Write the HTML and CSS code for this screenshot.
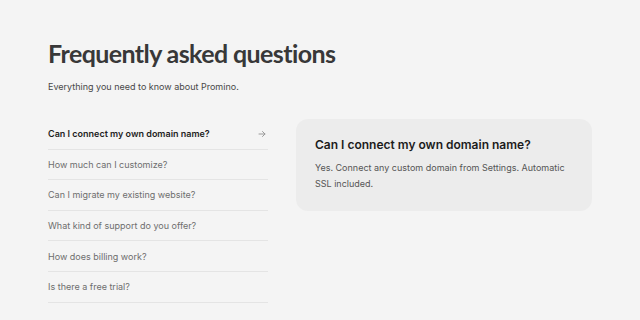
FILE: index.html
```html
<!DOCTYPE html>
<html lang="en">
<head>
	<meta charset="utf-8">
	<title>FAQ - Promino</title>
	<link rel="stylesheet" href="styles.css">
</head>
<body>
	<div class="container">
		<h1 class="title">Frequently asked questions</h1>
		<p class="subtitle">Everything you need to know about Promino.</p>

		<div class="faq">
			<ul class="questions">
				<li class="question active">
					<span>Can I connect my own domain name?</span>
					<svg class="arrow" width="8" height="8" viewBox="0 0 8 8" fill="none" stroke="currentColor" stroke-width="1" stroke-linecap="round" stroke-linejoin="round">
						<path d="M1 4h6M4.5 1.5 7 4 4.5 6.5"/>
					</svg>
				</li>
				<li class="question"><span>How much can I customize?</span></li>
				<li class="question"><span>Can I migrate my existing website?</span></li>
				<li class="question"><span>What kind of support do you offer?</span></li>
				<li class="question"><span>How does billing work?</span></li>
				<li class="question"><span>Is there a free trial?</span></li>
			</ul>

			<div class="answer">
				<h2>Can I connect my own domain name?</h2>
				<p>Yes. Connect any custom domain from Settings. Automatic SSL included.</p>
			</div>
		</div>
	</div>
</body>
</html>
```

FILE: styles.css
```css
body {
	margin: 0;
	font-family: Inter, "Noto Sans", sans-serif;
	background-color: #f4f4f4;
	color: #333;
}
.container {
	padding: 35px 48px 0 48px;
}
.title {
	margin: 0;
	font-family: Lato, Inter, sans-serif;
	font-size: 25px;
	font-weight: 700;
	letter-spacing: -0.6px;
	color: #383838;
	line-height: 36px;
}
.subtitle {
	margin: 9px 0 0 0;
	font-size: 9px;
	color: #484848;
	line-height: 14px;
}
.faq {
	display: flex;
	gap: 28px;
	margin-top: 25px;
	align-items: flex-start;
}
.questions {
	list-style: none;
	margin: 0;
	padding: 0;
	width: 220px;
	flex-shrink: 0;
}
.question {
	display: flex;
	align-items: center;
	justify-content: space-between;
	height: 29.6px;
	border-bottom: 1px solid #e4e4e4;
	font-size: 9px;
	color: #6e6e6e;
}
.question.active {
	color: #1e1e1e;
	font-weight: 600;
}
.arrow {
	color: #9a9a9a;
	margin-right: 2px;
}
.answer {
	width: 296px;
	box-sizing: border-box;
	padding: 18px 19px 19px 19px;
	background-color: #ececec;
	border-radius: 12px;
}
.answer h2 {
	margin: 0;
	font-size: 12px;
	font-weight: 600;
	color: #1c1c1c;
	line-height: 16px;
}
.answer p {
	margin: 7px 0 0 0;
	font-size: 9px;
	line-height: 16px;
	color: #555;
}
```
